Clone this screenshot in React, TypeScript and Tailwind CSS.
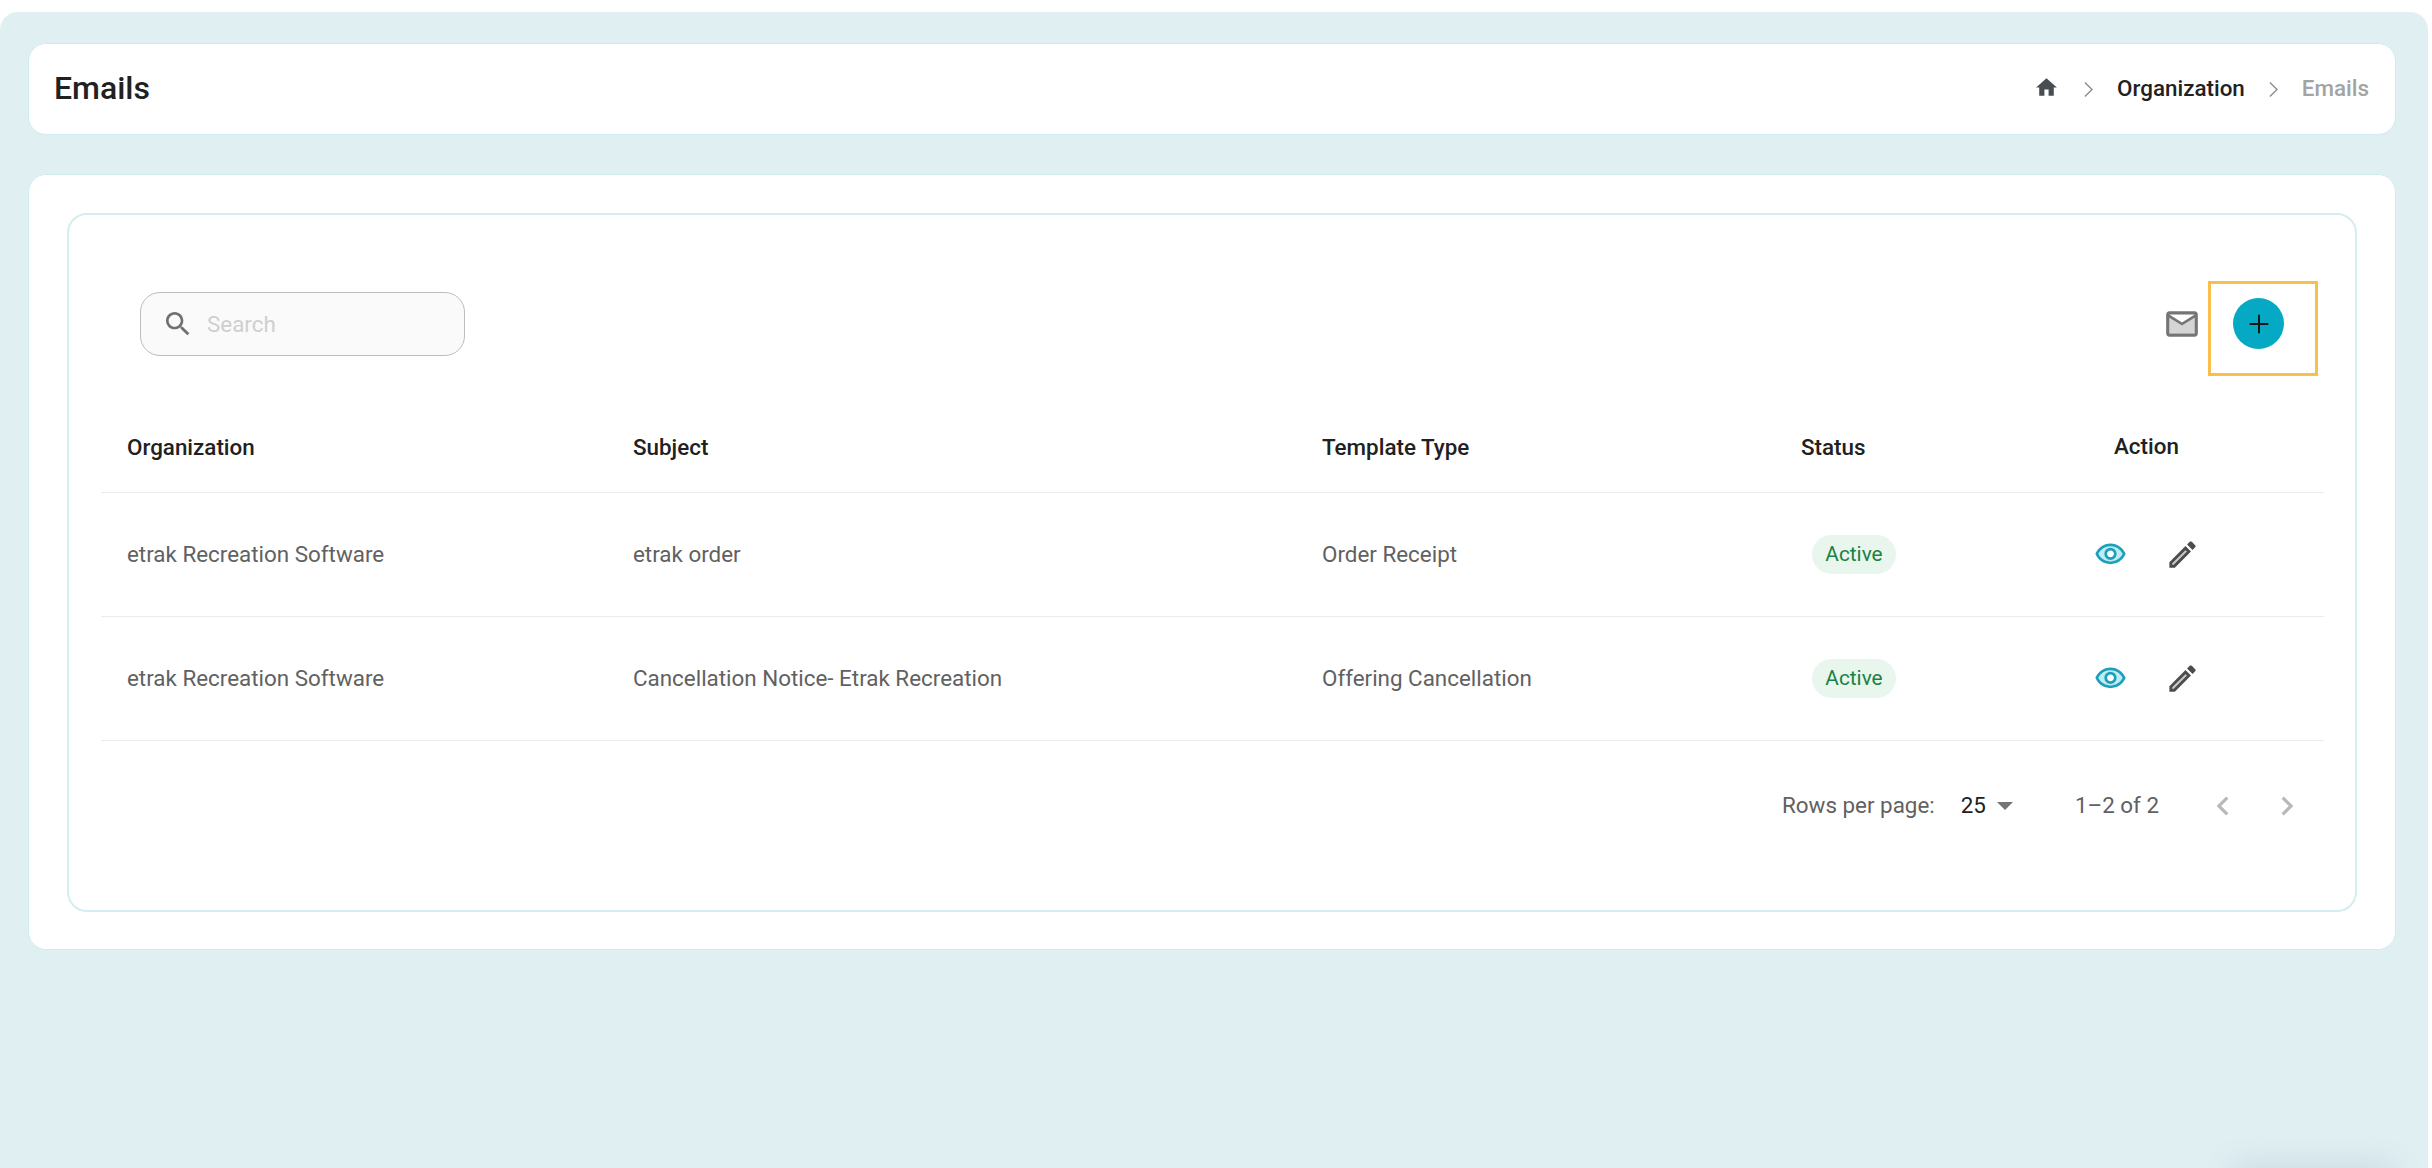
import type { ReactNode } from "react";

type Email = { organization: string; subject: string; type: string };

const emails: Email[] = [
  { organization: "etrak Recreation Software", subject: "etrak order", type: "Order Receipt" },
  {
    organization: "etrak Recreation Software",
    subject: "Cancellation Notice- Etrak Recreation",
    type: "Offering Cancellation",
  },
];

function Icon({ className, children }: { className: string; children: ReactNode }) {
  return (
    <svg viewBox="0 0 24 24" fill="currentColor" className={`shrink-0 ${className}`}>
      {children}
    </svg>
  );
}

function Separator() {
  return (
    <svg viewBox="0 0 9 15" className="mt-0.5 h-[15px] w-[9px] text-[#8c8c8c]" fill="none" stroke="currentColor" strokeWidth="1.4">
      <path d="M0.9 0.5 8 7.500 0.9 14.500" />
    </svg>
  );
}

function Header() {
  return (
    <header className="flex h-[92px] items-center justify-between rounded-[18px] border border-[#cfebee] bg-white pr-[26px] pl-[25px]">
      <h1 className="pb-[2px] text-[32px] font-medium text-[#212121]">Emails</h1>
      <nav className="flex items-center text-[22.4px] font-medium">
        <Icon className="mr-[25px] mb-[2px] size-[25px] text-[#4a4d50]">
          <path d="M10 20v-6h4v6h5v-8h3L12 3 2 12h3v8z" />
        </Icon>
        <Separator />
        <span className="mr-[24px] ml-[24px] text-[#212121]">Organization</span>
        <Separator />
        <span className="ml-[24px] text-[#a3a3a3]">Emails</span>
      </nav>
    </header>
  );
}

function Toolbar() {
  return (
    <div className="flex h-[190px] items-start justify-between pt-[66px]">
      <label className="mt-[11px] ml-[39px] flex h-16 w-[325px] items-center rounded-[20px] border border-[#bdbdbd] bg-[#fafafa] pl-[21px]">
        <Icon className="size-8 text-[#707070]">
          <path d="M15.5 14h-.79l-.28-.27C15.41 12.59 16 11.11 16 9.5 16 5.91 13.09 3 9.5 3S3 5.91 3 9.5 5.91 16 9.5 16c1.61 0 3.09-.59 4.23-1.57l.27.28v.79l5 4.99L20.49 19zm-6 0C7.01 14 5 11.99 5 9.5S7.01 5 9.5 5 14 7.01 14 9.5 11.99 14 9.5 14" />
        </Icon>
        <input
          placeholder="Search"
          className="ml-[13px] w-full min-w-0 bg-transparent pt-[2px] pr-4 text-[22.4px] outline-none placeholder:text-[#cfcfcf]"
        />
      </label>
      <div className="mr-[6px] flex items-start">
        <Icon className="mt-[24px] mr-[7px] size-[38px] text-[#757575]">
          <path d="M4 6.5v11.500h16V8l-8 5-8-5z" opacity=".3" />
          <path d="M22 6c0-1.100-.9-2-2-2H4c-1.100 0-2 .9-2 2v12c0 1.100.9 2 2 2h16c1.100 0 2-.9 2-2zm-2 0-8 5-8-5zm0 12H4V8l8 5 8-5z" />
        </Icon>
        <div className="h-[95px] w-[110px] border-3 border-[#fabe4b] pt-[14px] pl-[22px]">
          <button className="grid size-[51px] place-items-center rounded-full bg-[#06a9c3] text-[#171717]">
            <Icon className="size-8">
              <path d="M19 12.750h-6.250V19h-1.500v-6.250H5v-1.500h6.250V5h1.500v6.250H19z" />
            </Icon>
          </button>
        </div>
      </div>
    </div>
  );
}

const columns = "grid grid-cols-[506px_689px_479px_298px_minmax(0,1fr)] items-center border-b border-[#ebebeb] pl-[26px]";

function EmailTable() {
  return (
    <div className="text-[22.4px] text-[#616161]">
      <div className={`${columns} h-[88px] pb-[1px] font-medium text-[#212121]`}>
        <span>Organization</span>
        <span>Subject</span>
        <span>Template Type</span>
        <span>Status</span>
        <span className="pb-[2px] pl-[15px]">Action</span>
      </div>
      {emails.map((email) => (
        <div key={email.subject} className={`${columns} h-[124px]`}>
          <span>{email.organization}</span>
          <span>{email.subject}</span>
          <span>{email.type}</span>
          <span className="ml-[11px] flex h-[39px] w-[84px] items-center justify-center rounded-[20px] bg-[#e8f6ed] text-[20.8px] text-[#1a8243]">
            Active
          </span>
          <span className="-ml-[5px] flex items-center">
            <Icon className="size-[33px] text-[#1c9fb9]">
              <path
                d="M12 6c-3.790 0-7.170 2.130-8.820 5.500C4.830 14.870 8.210 17 12 17s7.170-2.130 8.820-5.500C19.170 8.130 15.790 6 12 6m0 10c-2.480 0-4.500-2.020-4.500-4.500S9.520 7 12 7s4.500 2.020 4.500 4.500S14.480 16 12 16"
                fill="#22c3dc"
                opacity=".3"
              />
              <path d="M12 4C7 4 2.730 7.110 1 11.500 2.730 15.890 7 19 12 19s9.270-3.110 11-7.500C21.270 7.110 17 4 12 4m0 13c-3.790 0-7.170-2.130-8.820-5.500C4.830 8.130 8.210 6 12 6s7.170 2.130 8.820 5.500C19.170 14.870 15.790 17 12 17m0-10c-2.480 0-4.500 2.020-4.500 4.500S9.520 16 12 16s4.500-2.020 4.500-4.500S14.480 7 12 7m0 7c-1.380 0-2.500-1.120-2.500-2.500S10.620 9 12 9s2.500 1.120 2.500 2.500S13.380 14 12 14" />
            </Icon>
            <Icon className="ml-[38px] size-[35px] text-[#4d4d4d]">
              <path d="M5 18.080V19h.92l9.060-9.060-.92-.92z" opacity=".3" />
              <path d="M20.710 7.040c.39-.39.39-1.020 0-1.410l-2.340-2.340c-.2-.2-.45-.29-.71-.29s-.51.1-.7.290l-1.830 1.830 3.750 3.750zM3 17.250V21h3.750L17.810 9.940l-3.750-3.750zM5.920 19H5v-.92l9.060-9.060.92.920z" />
            </Icon>
          </span>
        </div>
      ))}
    </div>
  );
}

function Pagination() {
  return (
    <footer className="flex h-[129px] items-center justify-end pr-[18px] text-[22.4px] text-[#616161]">
      <span>Rows per page:</span>
      <span className="ml-[26px] text-[#212121]">25</span>
      <svg viewBox="0 0 16 8" className="ml-[11px] h-2 w-4 text-[#757575]" fill="currentColor">
        <path d="M0 0h16L8 8z" />
      </svg>
      <span className="ml-[62px]">1–2 of 2</span>
      <Icon className="ml-[45px] size-[38px] text-[#b8b8b8]">
        <path d="M15.410 16.590 10.830 12l4.580-4.590L14 6l-6 6 6 6z" />
      </Icon>
      <Icon className="ml-[26px] size-[38px] text-[#b8b8b8]">
        <path d="M8.590 16.590 13.170 12 8.590 7.410 10 6l6 6-6 6z" />
      </Icon>
    </footer>
  );
}

export default function App() {
  return (
    <div className="h-[1168px] w-[2432px] overflow-hidden bg-white pt-3 font-[Roboto,sans-serif]">
      <main className="relative h-[1156px] w-[2428px] overflow-hidden rounded-t-[18px] bg-[#dfeff2] pt-[31px] pr-[32px] pl-[28px]">
        <Header />
        <section className="mt-[39px] h-[776px] rounded-[18px] border border-[#cfebee] bg-white pt-[38px] pr-[38px] pl-[38px]">
          <div className="h-[699px] rounded-[20px] border-2 border-[#d5edef] pr-[31px] pl-[32px]">
            <Toolbar />
            <EmailTable />
            <Pagination />
          </div>
        </section>
        <div className="absolute right-[40px] -bottom-[14px] h-[10px] w-[150px] shadow-[0_0_30px_4px_rgba(110,120,140,0.25)]" />
      </main>
    </div>
  );
}
